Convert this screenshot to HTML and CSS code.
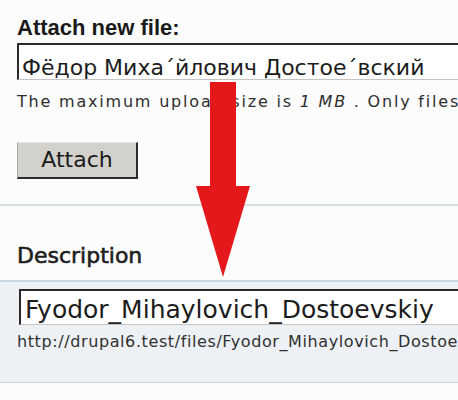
FILE: index.html
```html
<!DOCTYPE html>
<html lang="ru">
<head>
<meta charset="utf-8">
<title>Attach new file</title>
<link rel="stylesheet" href="styles.css">
</head>
<body>
<div class="page">
  <section class="upload">
    <h2 class="title">Attach new file:</h2>
    <div class="field field-name">Фёдор Миха´йлович Достое´вский</div>
    <p class="help">The maximum upload size is <em>1 MB</em> . Only files with the following extensions</p>
    <button class="btn" type="button">Attach</button>
  </section>
  <section class="desc">
    <h3 class="label">Description</h3>
  </section>
  <section class="band">
    <div class="field field-desc">Fyodor_Mihaylovich_Dostoevskiy</div>
    <p class="url">http://drupal6.test/files/Fyodor_Mihaylovich_Dostoevskiy</p>
  </section>
  <svg class="arrow" width="458" height="400" viewBox="0 0 458 400" aria-hidden="true">
    <polygon points="210,82 236,82 236,186 250,186 223,277 196,186 210,186" fill="#e4181a"/>
  </svg>
</div>
</body>
</html>
```

FILE: styles.css
```css
html, body {
  margin: 0;
  padding: 0;
}
body {
  width: 458px;
  height: 400px;
  overflow: hidden;
  background: #fcfcfd;
  color: #1e1e1e;
}
.page {
  position: relative;
  width: 458px;
  height: 400px;
  overflow: hidden;
}
.upload {
  padding: 15px 0 25px 17px;
  border-bottom: 2px solid #d6dee6;
}
.title {
  margin: 0;
  font: 700 22px/26px "Liberation Sans", Arial, sans-serif;
  color: #1a1a1a;
}
.field {
  box-sizing: border-box;
  width: 520px;
  background: #fff;
  border-top: 2px solid #2a2a2a;
  border-left: 2px solid #2a2a2a;
  border-bottom: 1px solid #c4c4c4;
  overflow: hidden;
  white-space: nowrap;
  font-family: "DejaVu Sans", sans-serif;
  color: #1c1c1c;
}
.field-name {
  margin-top: 2px;
  height: 37px;
  padding: 10px 0 0 3px;
  font-size: 22px;
  line-height: 26px;
}
.help {
  margin: 12px 0 0;
  font: 400 16px/20px "DejaVu Sans", sans-serif;
  letter-spacing: 1.8px;
  white-space: nowrap;
  color: #2e2e2e;
}
.help em {
  font-style: italic;
}
.btn {
  display: block;
  box-sizing: border-box;
  margin-top: 30px;
  width: 121px;
  height: 37px;
  padding: 0;
  background: #d3d1cb;
  border-top: 1px solid #e4e2dd;
  border-left: 1px solid #a9a7a2;
  border-right: 2px solid #2c2c2c;
  border-bottom: 2px solid #2c2c2c;
  font: 400 22px/26px "DejaVu Sans", sans-serif;
  color: #1a1a1a;
}
.desc {
  padding: 37px 0 12px 17px;
}
.label {
  margin: 0;
  font: 400 22px/25px "DejaVu Sans", sans-serif;
  -webkit-text-stroke: 0.6px #1e1e1e;
  color: #1e1e1e;
}
.band {
  border-top: 2px solid #c6d6e5;
  border-bottom: 1px solid #cbd2da;
  background: #edf1f5;
  padding: 7px 0 31px 19px;
}
.field-desc {
  height: 36px;
  padding: 4px 0 0 4px;
  font-size: 25px;
  line-height: 29px;
}
.url {
  margin: 8px 0 0 -2px;
  font: 400 16px/18px "DejaVu Sans", sans-serif;
  letter-spacing: 0.6px;
  white-space: nowrap;
  color: #303030;
}
.arrow {
  position: absolute;
  left: 0;
  top: 0;
}
```
